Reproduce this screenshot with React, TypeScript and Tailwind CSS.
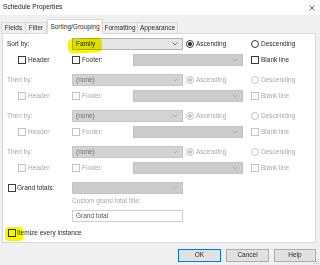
import React from 'react'

const font = { fontFamily: '"Liberation Sans", Arial, sans-serif' }

function Checkbox({ disabled }: { disabled?: boolean }) {
  return (
    <span
      className={`inline-block h-[8px] w-[8px] shrink-0 border bg-white ${
        disabled ? 'border-[#c4c4c4]' : 'border-[#3a3a3a]'
      }`}
    />
  )
}

function Radio({ checked, disabled }: { checked?: boolean; disabled?: boolean }) {
  return (
    <span
      className={`inline-flex h-[8px] w-[8px] shrink-0 items-center justify-center rounded-full border bg-white ${
        disabled ? 'border-[#c4c4c4]' : 'border-[#3a3a3a]'
      }`}
    >
      {checked && (
        <span className={`h-[4px] w-[4px] rounded-full ${disabled ? 'bg-[#c4c4c4]' : 'bg-[#222222]'}`} />
      )}
    </span>
  )
}

function Chevron({ disabled }: { disabled?: boolean }) {
  return (
    <svg width="6" height="4" viewBox="0 0 6 4" className="shrink-0">
      <path d="M0.5 0.5 L3 3 L5.5 0.5" fill="none" stroke={disabled ? '#a8a8a8' : '#555555'} strokeWidth="0.8" />
    </svg>
  )
}

function Combo({
  value,
  width,
  variant,
}: {
  value?: string
  width: string
  variant: 'enabled' | 'none' | 'blank'
}) {
  const look =
    variant === 'enabled'
      ? 'bg-[#e6e6e6] border-[#b4b4b4] text-[#2b2b2b]'
      : variant === 'none'
        ? 'bg-[#d3d3d3] border-[#c6c6c6] text-[#727272]'
        : 'bg-[#cccccc] border-[#c4c4c4]'
  return (
    <div className={`flex h-[12px] items-center justify-between border pl-[3px] pr-[4px] ${width} ${look}`}>
      <span>{value}</span>
      <Chevron disabled={variant !== 'enabled'} />
    </div>
  )
}

function SortGroup({ label, value, enabled }: { label: string; value: string; enabled?: boolean }) {
  const txt = enabled ? 'text-[#2b2b2b]' : 'text-[#a8a8a8]'
  return (
    <div className="mb-[8px]">
      <div className="flex h-[12px] items-center">
        <span className={`w-[65px] ${txt}`}>{label}</span>
        <Combo value={value} width="w-[111px]" variant={enabled ? 'enabled' : 'none'} />
        <label className="ml-[3px] flex w-[65px] items-center gap-[2px]">
          <Radio checked disabled={!enabled} />
          <span className={txt}>Ascending</span>
        </label>
        <label className="flex items-center gap-[2px]">
          <Radio disabled={!enabled} />
          <span className={txt}>Descending</span>
        </label>
      </div>
      <div className="mt-[4px] flex h-[12px] items-center">
        <span className="w-[11px]" />
        <label className="flex w-[54px] items-center gap-[2px]">
          <Checkbox disabled={!enabled} />
          <span className={txt}>Header</span>
        </label>
        <label className="flex w-[61px] items-center gap-[2px]">
          <Checkbox disabled={!enabled} />
          <span className={txt}>Footer:</span>
        </label>
        <Combo width="w-[110px]" variant="blank" />
        <label className="ml-[8px] flex items-center gap-[2px]">
          <Checkbox disabled={!enabled} />
          <span className={txt}>Blank line</span>
        </label>
      </div>
    </div>
  )
}

const tabs = ['Fields', 'Filter', 'Sorting/Grouping', 'Formatting', 'Appearance']
const tabWidths = ['w-[25px]', 'w-[22px]', 'w-[56px]', 'w-[36px]', 'w-[41px]']

export default function App() {
  return (
    <div className="relative h-[265px] w-[320px] overflow-hidden bg-[#f0f0f0] text-[6.5px] leading-none text-[#2b2b2b]" style={font}>
      {/* title bar */}
      <div className="flex h-[15px] items-center justify-between bg-white pl-[3px] pr-[5px]">
        <span className="text-[6.6px] text-[#1a1a1a]">Schedule Properties</span>
        <svg width="6" height="6" viewBox="0 0 6 6">
          <path d="M0.5 0.5 L5.5 5.5 M5.5 0.5 L0.5 5.5" stroke="#333333" strokeWidth="0.7" />
        </svg>
      </div>

      {/* tabs */}
      <div className="flex h-[18px] items-end pl-[1px]">
        {tabs.map((t, i) =>
          i === 2 ? (
            <div
              key={t}
              className={`relative z-10 -mb-[1px] flex h-[15px] items-center justify-center border border-b-0 border-[#d9d9d9] bg-white ${tabWidths[i]}`}
            >
              {t}
            </div>
          ) : (
            <div
              key={t}
              className={`-ml-[1px] flex h-[11px] items-center justify-center border border-b-0 border-[#d9d9d9] bg-[#f0f0f0] first:ml-0 ${tabWidths[i]}`}
            >
              {t}
            </div>
          ),
        )}
      </div>

      {/* panel */}
      <div className="ml-[2px] h-[210px] w-[314px] border border-[#d9d9d9] bg-white pl-[4px] pt-[4px]">
        <SortGroup label="Sort by:" value="Family" enabled />
        <SortGroup label="Then by:" value="(none)" />
        <SortGroup label="Then by:" value="(none)" />
        <SortGroup label="Then by:" value="(none)" />

        <div className="flex h-[12px] items-center">
          <label className="ml-[1px] flex w-[64px] items-center gap-[1px]">
            <Checkbox />
            <span>Grand totals:</span>
          </label>
          <Combo width="w-[111px]" variant="blank" />
        </div>
        <div className="ml-[65px] mt-[3px] flex h-[8px] items-center text-[#a8a8a8]">Custom grand total title:</div>
        <div className="ml-[65px] mt-[5px] flex h-[12px] w-[111px] items-center border border-[#cfcfcf] bg-white pl-[3px] text-[#555555]">
          Grand total
        </div>
        <div className="mt-[5px] flex h-[12px] items-center">
          <label className="ml-[1px] flex items-center gap-[1px]">
            <Checkbox />
            <span>Itemize every instance</span>
          </label>
        </div>
      </div>

      {/* buttons */}
      <div className="mt-[6px] flex justify-end gap-[5px] pr-[4px]">
        <button className="h-[13px] w-[43px] border border-[#0078d7] bg-[#e1e1e1] text-[6.5px] text-[#2b2b2b]">OK</button>
        <button className="h-[13px] w-[43px] border border-[#adadad] bg-[#e1e1e1] text-[6.5px] text-[#2b2b2b]">Cancel</button>
        <button className="h-[13px] w-[42px] border border-[#adadad] bg-[#e1e1e1] text-[6.5px] text-[#2b2b2b]">Help</button>
      </div>

      {/* resize grip */}
      <svg className="absolute bottom-[1px] right-[1px]" width="5" height="5" viewBox="0 0 5 5">
        <rect x="4" y="0" width="1" height="1" fill="#b8b8b8" />
        <rect x="2" y="2" width="1" height="1" fill="#b8b8b8" />
        <rect x="4" y="2" width="1" height="1" fill="#b8b8b8" />
        <rect x="0" y="4" width="1" height="1" fill="#b8b8b8" />
        <rect x="2" y="4" width="1" height="1" fill="#b8b8b8" />
        <rect x="4" y="4" width="1" height="1" fill="#b8b8b8" />
      </svg>

      {/* highlighter marks */}
      <div className="pointer-events-none absolute left-[68px] top-[38px] h-[15px] w-[34px] -rotate-3 rounded-[5px] bg-[#f5f500] mix-blend-multiply" />
      <div className="pointer-events-none absolute left-[5px] top-[227px] h-[14px] w-[18px] rounded-[4px] bg-[#f5f500] mix-blend-multiply" />
    </div>
  )
}
